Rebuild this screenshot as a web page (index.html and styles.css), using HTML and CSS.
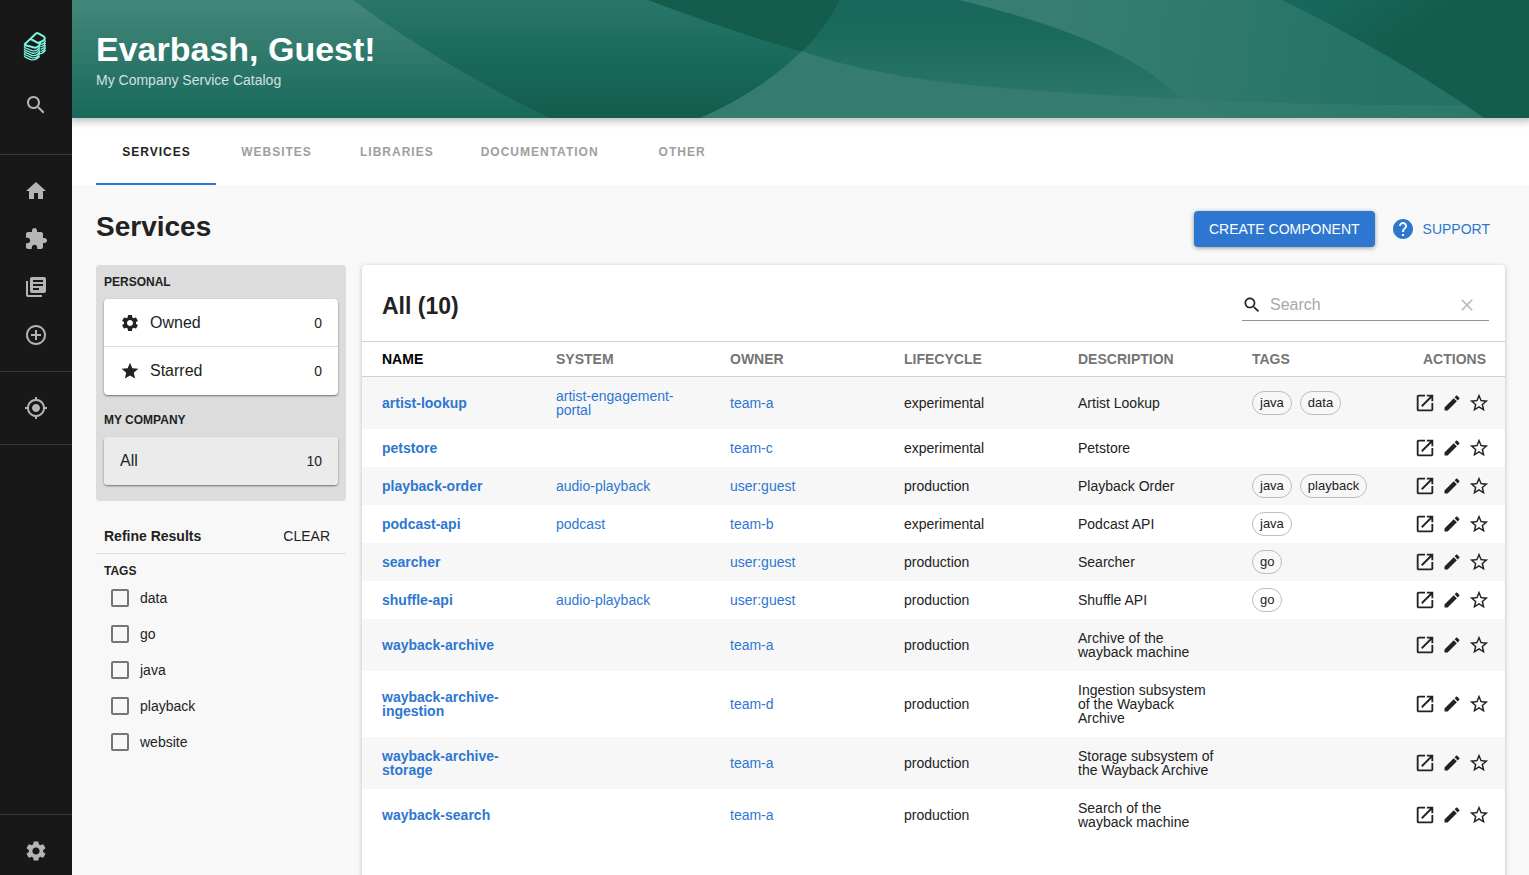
FILE: index.html
```html
<!DOCTYPE html>
<html lang="en">
<head>
<meta charset="utf-8">
<title>Service Catalog</title>
<link rel="stylesheet" href="styles.css">
</head>
<body>
<svg class="sprite" aria-hidden="true">
  <symbol id="i-search" viewBox="0 0 24 24"><path d="M15.5 14h-.79l-.28-.27C15.41 12.59 16 11.11 16 9.5 16 5.91 13.09 3 9.5 3S3 5.91 3 9.5 5.91 16 9.5 16c1.61 0 3.09-.59 4.23-1.57l.27.28v.79l5 4.99L20.49 19l-4.99-5zm-6 0C7.01 14 5 11.99 5 9.5S7.01 5 9.5 5 14 7.01 14 9.5 11.99 14 9.5 14z"/></symbol>
  <symbol id="i-home" viewBox="0 0 24 24"><path d="M10 20v-6h4v6h5v-8h3L12 3 2 12h3v8z"/></symbol>
  <symbol id="i-ext" viewBox="0 0 24 24"><path d="M20.5 11H19V7c0-1.1-.9-2-2-2h-4V3.5C13 2.12 11.88 1 10.5 1S8 2.12 8 3.5V5H4c-1.1 0-1.99.9-1.99 2v3.8H3.5c1.49 0 2.7 1.21 2.7 2.7s-1.21 2.7-2.7 2.7H2V20c0 1.1.9 2 2 2h3.8v-1.5c0-1.49 1.21-2.7 2.7-2.7 1.49 0 2.7 1.21 2.7 2.7V22H17c1.1 0 2-.9 2-2v-4h1.5c1.38 0 2.5-1.12 2.5-2.5S21.88 11 20.5 11z"/></symbol>
  <symbol id="i-docs" viewBox="0 0 24 24"><path d="M4 6H2v14c0 1.1.9 2 2 2h14v-2H4V6zm16-4H8c-1.1 0-2 .9-2 2v12c0 1.1.9 2 2 2h12c1.1 0 2-.9 2-2V4c0-1.1-.9-2-2-2zm-1 9H9V9h10v2zm-4 4H9v-2h6v2zm4-8H9V5h10v2z"/></symbol>
  <symbol id="i-add" viewBox="0 0 24 24"><path d="M13 7h-2v4H7v2h4v4h2v-4h4v-2h-4V7zm-1-5C6.48 2 2 6.48 2 12s4.48 10 10 10 10-4.48 10-10S17.52 2 12 2zm0 18c-4.41 0-8-3.59-8-8s3.59-8 8-8 8 3.59 8 8-3.59 8-8 8z"/></symbol>
  <symbol id="i-loc" viewBox="0 0 24 24"><path d="M12 8c-2.21 0-4 1.79-4 4s1.79 4 4 4 4-1.79 4-4-1.79-4-4-4zm8.94 3c-.46-4.17-3.77-7.48-7.94-7.94V1h-2v2.06C6.83 3.52 3.52 6.83 3.06 11H1v2h2.06c.46 4.17 3.77 7.48 7.94 7.94V23h2v-2.06c4.17-.46 7.48-3.77 7.94-7.94H23v-2h-2.06zM12 19c-3.87 0-7-3.13-7-7s3.13-7 7-7 7 3.13 7 7-3.13 7-7 7z"/></symbol>
  <symbol id="i-gear" viewBox="0 0 24 24"><path d="M19.14 12.94c.04-.3.06-.61.06-.94 0-.32-.02-.64-.07-.94l2.03-1.58c.18-.14.23-.41.12-.61l-1.92-3.32c-.12-.22-.37-.29-.59-.22l-2.39.96c-.5-.38-1.03-.7-1.62-.94l-.36-2.54c-.04-.24-.24-.41-.48-.41h-3.84c-.24 0-.43.17-.47.41l-.36 2.54c-.59.24-1.13.57-1.62.94l-2.39-.96c-.22-.08-.47 0-.59.22L2.74 8.87c-.12.21-.08.47.12.61l2.03 1.58c-.05.3-.09.63-.09.94s.02.64.07.94l-2.03 1.58c-.18.14-.23.41-.12.61l1.92 3.32c.12.22.37.29.59.22l2.39-.96c.5.38 1.03.7 1.62.94l.36 2.54c.05.24.24.41.48.41h3.84c.24 0 .44-.17.47-.41l.36-2.54c.59-.24 1.13-.56 1.62-.94l2.39.96c.22.08.47 0 .59-.22l1.92-3.32c.12-.22.07-.47-.12-.61l-2.01-1.58zM12 15.6c-1.98 0-3.6-1.62-3.6-3.6s1.62-3.6 3.6-3.6 3.6 1.62 3.6 3.6-1.62 3.6-3.6 3.6z"/></symbol>
  <symbol id="i-star" viewBox="0 0 24 24"><path d="M12 17.27L18.18 21l-1.64-7.03L22 9.24l-7.19-.61L12 2 9.19 8.63 2 9.24l5.46 4.73L5.82 21z"/></symbol>
  <symbol id="i-star-o" viewBox="0 0 24 24"><path d="M22 9.24l-7.19-.62L12 2 9.19 8.63 2 9.24l5.46 4.73L5.82 21 12 17.27 18.18 21l-1.63-7.03L22 9.24zM12 15.4l-3.76 2.27 1-4.28-3.32-2.88 4.38-.38L12 6.1l1.71 4.04 4.38.38-3.32 2.88 1 4.28L12 15.4z"/></symbol>
  <symbol id="i-open" viewBox="0 0 24 24"><path d="M19 19H5V5h7V3H5c-1.11 0-2 .9-2 2v14c0 1.1.89 2 2 2h14c1.1 0 2-.9 2-2v-7h-2v7zM14 3v2h3.59l-9.83 9.83 1.41 1.41L19 6.41V10h2V3h-7z"/></symbol>
  <symbol id="i-edit" viewBox="0 0 24 24"><path d="M3 17.25V21h3.75L17.81 9.94l-3.75-3.75L3 17.25zM20.71 7.04c.39-.39.39-1.02 0-1.41l-2.34-2.34c-.39-.39-1.02-.39-1.41 0l-1.83 1.83 3.75 3.75 1.83-1.83z"/></symbol>
  <symbol id="i-help" viewBox="0 0 24 24"><path d="M12 2C6.48 2 2 6.48 2 12s4.48 10 10 10 10-4.48 10-10S17.52 2 12 2zm1 17h-2v-2h2v2zm2.07-7.75l-.9.92C13.45 12.9 13 13.5 13 15h-2v-.5c0-1.1.45-2.1 1.17-2.83l1.24-1.26c.37-.36.59-.86.59-1.41 0-1.1-.9-2-2-2s-2 .9-2 2H8c0-2.21 1.79-4 4-4s4 1.79 4 4c0 .88-.36 1.68-.93 2.25z"/></symbol>
  <symbol id="i-clear" viewBox="0 0 24 24"><path d="M19 6.41L17.59 5 12 10.59 6.41 5 5 6.41 10.59 12 5 17.59 6.41 19 12 13.41 17.59 19 19 17.59 13.41 12z"/></symbol>
</svg>
<div class="app">
  <nav class="rail" aria-label="Main">
    <a class="logo" href="#" aria-label="Home page">
      <svg viewBox="24 18 72 90" width="24" height="30">
        <g fill="none" stroke="#7df3e1" stroke-linejoin="round" stroke-linecap="round">
          <path stroke-width="6" d="M30 57 64 25q3-2 6 0l17 10q5 5 0 10-5 5-12 6 2 7-4 12-9 8-19 3L31 61q-3-2-1-4zM47 42l20 11q4 2 8-2"/>
          <path stroke-width="4" d="M28 65q1 2 4 4l19 8q14 4 24-12M28 72q1 2 4 4l19 8q14 4 24-12M28 79q1 2 4 4l19 8q14 4 24-12M28 86q1 2 4 4l19 8q14 4 24-12M28 93q1 2 4 4l15 7q14 3 26-9M80 58q9-3 11-10M80 65q9-3 11-10M80 72q9-3 11-10M80 79q9-3 11-10M78 86q10-3 13-10"/>
        </g>
      </svg>
    </a>
    <button class="rail-item" aria-label="Search"><svg class="ic24"><use href="#i-search"/></svg></button>
    <hr class="rail-line rail-line-first">
    <a class="rail-item" href="#" aria-label="Home"><svg class="ic24"><use href="#i-home"/></svg></a>
    <a class="rail-item" href="#" aria-label="Plugins"><svg class="ic24"><use href="#i-ext"/></svg></a>
    <a class="rail-item" href="#" aria-label="Docs"><svg class="ic24"><use href="#i-docs"/></svg></a>
    <a class="rail-item" href="#" aria-label="Create"><svg class="ic24"><use href="#i-add"/></svg></a>
    <hr class="rail-line">
    <a class="rail-item" href="#" aria-label="Tech Radar"><svg class="ic24"><use href="#i-loc"/></svg></a>
    <hr class="rail-line">
    <div class="rail-space"></div>
    <hr class="rail-line">
    <a class="rail-item" href="#" aria-label="Settings"><svg class="ic24"><use href="#i-gear"/></svg></a>
  </nav>
  <main class="page">
    <header class="hero">
      <svg class="hero-art" viewBox="72 0 1457 118" preserveAspectRatio="none" aria-hidden="true">
        <defs>
          <linearGradient id="ga" x1="0" y1="0" x2="0" y2="1"><stop offset="0" stop-color="#43877a"/><stop offset="1" stop-color="#18695a"/></linearGradient>
          <linearGradient id="gb" x1="0" y1="0" x2="0" y2="1"><stop offset="0" stop-color="#2a776a"/><stop offset=".5" stop-color="#186a5b"/><stop offset="1" stop-color="#145c4c"/></linearGradient>
          <linearGradient id="gc" x1="0" y1="0" x2="0" y2="1"><stop offset="0" stop-color="#17685a"/><stop offset=".3" stop-color="#1b6b5d"/><stop offset="1" stop-color="#2f7a6c"/></linearGradient>
          <linearGradient id="gd" gradientUnits="userSpaceOnUse" x1="1060" y1="20" x2="1390" y2="70"><stop offset="0" stop-color="#377e70"/><stop offset="1" stop-color="#247365"/></linearGradient>
          <linearGradient id="ge" gradientUnits="userSpaceOnUse" x1="1330" y1="0" x2="1375" y2="65"><stop offset="0" stop-color="#17685a"/><stop offset="1" stop-color="#145c4b"/></linearGradient>
          <linearGradient id="gf" gradientUnits="userSpaceOnUse" x1="1200" y1="0" x2="1484" y2="0"><stop offset="0" stop-color="#357c6f"/><stop offset="1" stop-color="#2b786a"/></linearGradient>
        </defs>
        <rect x="72" y="0" width="1457" height="118" fill="url(#gb)"/>
        <path fill="url(#ga)" d="M72 0H353Q440 65 550 118H72z"/>
        <path fill="#145c4b" d="M648 0Q727 30 802 52 827 27 840 0z"/>
        <path fill="url(#gc)" d="M840 0H1210V118H1000L802 52Q827 27 840 0z"/>
        <path fill="url(#gd)" d="M959 0H1282Q1400 58 1484 118H1198C1155 60 1070 27 959 0z"/>
        <path fill="url(#gf)" d="M700 118Q760 92 802 51C900 88 1060 92 1181 99Q1320 106 1468 105L1484 118z"/>
        <path fill="url(#ge)" d="M1282 0H1529V118H1484Q1400 58 1282 0z"/>
      </svg>
      <div class="hero-text">
        <h1 class="hero-title">Evarbash, Guest!</h1>
        <p class="hero-sub">My Company Service Catalog</p>
      </div>
    </header>
    <div class="tabs" role="tablist">
      <button class="tab tab-on" role="tab" aria-selected="true">SERVICES</button>
      <button class="tab" role="tab">WEBSITES</button>
      <button class="tab" role="tab">LIBRARIES</button>
      <button class="tab" role="tab">DOCUMENTATION</button>
      <button class="tab" role="tab">OTHER</button>
    </div>
    <div class="content">
      <div class="title-row">
        <h2 class="title">Services</h2>
        <button class="create">CREATE COMPONENT</button>
        <button class="support"><svg class="ic24"><use href="#i-help"/></svg>SUPPORT</button>
      </div>
      <div class="columns">
        <aside>
          <div class="groups">
            <h3 class="label">PERSONAL</h3>
            <div class="menu">
              <button class="menu-item menu-line"><svg class="ic20"><use href="#i-gear"/></svg><span class="menu-name">Owned</span><span class="menu-count">0</span></button>
              <button class="menu-item"><svg class="ic20"><use href="#i-star"/></svg><span class="menu-name">Starred</span><span class="menu-count">0</span></button>
            </div>
            <h3 class="label">MY COMPANY</h3>
            <div class="menu">
              <button class="menu-item menu-on"><span class="menu-name">All</span><span class="menu-count">10</span></button>
            </div>
          </div>
          <div class="refine">
            <h3 class="refine-title">Refine Results</h3>
            <button class="clear">CLEAR</button>
          </div>
          <h3 class="label label-tags">TAGS</h3>
          <div class="checks">
            <label class="check"><input class="box" type="checkbox">data</label>
            <label class="check"><input class="box" type="checkbox">go</label>
            <label class="check"><input class="box" type="checkbox">java</label>
            <label class="check"><input class="box" type="checkbox">playback</label>
            <label class="check"><input class="box" type="checkbox">website</label>
          </div>
        </aside>
        <section class="card">
          <div class="card-head">
            <h2 class="card-title">All (10)</h2>
            <div class="search">
              <svg class="ic20"><use href="#i-search"/></svg>
              <input class="search-input" type="text" placeholder="Search" aria-label="Search">
              <button class="search-clear" aria-label="Clear search"><svg class="ic20"><use href="#i-clear"/></svg></button>
            </div>
          </div>
          <table class="table">
            <thead>
              <tr><th class="sorted">NAME</th><th>SYSTEM</th><th>OWNER</th><th>LIFECYCLE</th><th>DESCRIPTION</th><th>TAGS</th><th class="col-actions">ACTIONS</th></tr>
            </thead>
            <tbody>
              <tr><td><a class="name" href="#">artist-lookup</a></td><td><a href="#">artist-engagement-portal</a></td><td><a href="#">team-a</a></td><td>experimental</td><td>Artist Lookup</td><td class="tags"><div class="chips"><span class="chip">java</span><span class="chip">data</span></div></td><td class="acts"><div class="act-row"><button class="act" aria-label="View"><svg class="ic22"><use href="#i-open"/></svg></button><button class="act" aria-label="Edit"><svg class="ic20"><use href="#i-edit"/></svg></button><button class="act" aria-label="Star"><svg class="ic22"><use href="#i-star-o"/></svg></button></div></td></tr>
              <tr><td><a class="name" href="#">petstore</a></td><td></td><td><a href="#">team-c</a></td><td>experimental</td><td>Petstore</td><td></td><td class="acts"><div class="act-row"><button class="act" aria-label="View"><svg class="ic22"><use href="#i-open"/></svg></button><button class="act" aria-label="Edit"><svg class="ic20"><use href="#i-edit"/></svg></button><button class="act" aria-label="Star"><svg class="ic22"><use href="#i-star-o"/></svg></button></div></td></tr>
              <tr><td><a class="name" href="#">playback-order</a></td><td><a href="#">audio-playback</a></td><td><a href="#">user:guest</a></td><td>production</td><td>Playback Order</td><td class="tags"><div class="chips"><span class="chip">java</span><span class="chip">playback</span></div></td><td class="acts"><div class="act-row"><button class="act" aria-label="View"><svg class="ic22"><use href="#i-open"/></svg></button><button class="act" aria-label="Edit"><svg class="ic20"><use href="#i-edit"/></svg></button><button class="act" aria-label="Star"><svg class="ic22"><use href="#i-star-o"/></svg></button></div></td></tr>
              <tr><td><a class="name" href="#">podcast-api</a></td><td><a href="#">podcast</a></td><td><a href="#">team-b</a></td><td>experimental</td><td>Podcast API</td><td class="tags"><div class="chips"><span class="chip">java</span></div></td><td class="acts"><div class="act-row"><button class="act" aria-label="View"><svg class="ic22"><use href="#i-open"/></svg></button><button class="act" aria-label="Edit"><svg class="ic20"><use href="#i-edit"/></svg></button><button class="act" aria-label="Star"><svg class="ic22"><use href="#i-star-o"/></svg></button></div></td></tr>
              <tr><td><a class="name" href="#">searcher</a></td><td></td><td><a href="#">user:guest</a></td><td>production</td><td>Searcher</td><td class="tags"><div class="chips"><span class="chip">go</span></div></td><td class="acts"><div class="act-row"><button class="act" aria-label="View"><svg class="ic22"><use href="#i-open"/></svg></button><button class="act" aria-label="Edit"><svg class="ic20"><use href="#i-edit"/></svg></button><button class="act" aria-label="Star"><svg class="ic22"><use href="#i-star-o"/></svg></button></div></td></tr>
              <tr><td><a class="name" href="#">shuffle-api</a></td><td><a href="#">audio-playback</a></td><td><a href="#">user:guest</a></td><td>production</td><td>Shuffle API</td><td class="tags"><div class="chips"><span class="chip">go</span></div></td><td class="acts"><div class="act-row"><button class="act" aria-label="View"><svg class="ic22"><use href="#i-open"/></svg></button><button class="act" aria-label="Edit"><svg class="ic20"><use href="#i-edit"/></svg></button><button class="act" aria-label="Star"><svg class="ic22"><use href="#i-star-o"/></svg></button></div></td></tr>
              <tr><td><a class="name" href="#">wayback-archive</a></td><td></td><td><a href="#">team-a</a></td><td>production</td><td>Archive of the wayback machine</td><td></td><td class="acts"><div class="act-row"><button class="act" aria-label="View"><svg class="ic22"><use href="#i-open"/></svg></button><button class="act" aria-label="Edit"><svg class="ic20"><use href="#i-edit"/></svg></button><button class="act" aria-label="Star"><svg class="ic22"><use href="#i-star-o"/></svg></button></div></td></tr>
              <tr><td><a class="name" href="#">wayback-archive-ingestion</a></td><td></td><td><a href="#">team-d</a></td><td>production</td><td>Ingestion subsystem of the Wayback Archive</td><td></td><td class="acts"><div class="act-row"><button class="act" aria-label="View"><svg class="ic22"><use href="#i-open"/></svg></button><button class="act" aria-label="Edit"><svg class="ic20"><use href="#i-edit"/></svg></button><button class="act" aria-label="Star"><svg class="ic22"><use href="#i-star-o"/></svg></button></div></td></tr>
              <tr><td><a class="name" href="#">wayback-archive-storage</a></td><td></td><td><a href="#">team-a</a></td><td>production</td><td>Storage subsystem of the Wayback Archive</td><td></td><td class="acts"><div class="act-row"><button class="act" aria-label="View"><svg class="ic22"><use href="#i-open"/></svg></button><button class="act" aria-label="Edit"><svg class="ic20"><use href="#i-edit"/></svg></button><button class="act" aria-label="Star"><svg class="ic22"><use href="#i-star-o"/></svg></button></div></td></tr>
              <tr><td><a class="name" href="#">wayback-search</a></td><td></td><td><a href="#">team-a</a></td><td>production</td><td>Search of the wayback machine</td><td></td><td class="acts"><div class="act-row"><button class="act" aria-label="View"><svg class="ic22"><use href="#i-open"/></svg></button><button class="act" aria-label="Edit"><svg class="ic20"><use href="#i-edit"/></svg></button><button class="act" aria-label="Star"><svg class="ic22"><use href="#i-star-o"/></svg></button></div></td></tr>
            </tbody>
          </table>
        </section>
      </div>
    </div>
  </main>
</div>
</body>
</html>
```
FILE: styles.css
```css
* { box-sizing: border-box; }

body {
  margin: 0;
  background: #f8f8f8;
  color: #222;
  font-family: "Liberation Sans", Helvetica, Arial, sans-serif;
  font-size: 14px;
}

h1, h2, h3, p { margin: 0; }

button {
  margin: 0;
  padding: 0;
  border: 0;
  background: none;
  color: inherit;
  font: inherit;
  cursor: pointer;
}

a { color: #2e77d0; text-decoration: none; }

svg { display: block; flex: none; fill: currentColor; }

.sprite { position: absolute; width: 0; height: 0; }
.ic20 { width: 20px; height: 20px; }
.ic22 { width: 22px; height: 22px; }
.ic24 { width: 24px; height: 24px; }

.app { display: flex; height: 100vh; }

/* Navigation rail */
.rail {
  display: flex;
  flex: none;
  flex-direction: column;
  width: 72px;
  background: #181818;
  color: #b5b5b5;
}

.logo { display: flex; justify-content: center; padding: 31px 2px 20px 0; }

.rail-item {
  display: flex;
  align-items: center;
  justify-content: center;
  height: 48px;
  color: #b5b5b5;
}

.rail-line {
  width: 100%;
  height: 1px;
  margin: 12px 0;
  border: 0;
  background: #383838;
}
.rail-line-first { margin-top: 25px; margin-bottom: 12px; }
.rail-space { flex: 1; }

.page { flex: 1; min-width: 0; overflow-y: auto; scrollbar-width: none; }

/* Banner */
.hero {
  position: relative;
  display: flex;
  align-items: center;
  height: 118px;
  padding: 2px 24px 0;
  box-shadow: 0 0 8px 3px rgba(20, 20, 20, 0.3);
  color: #fff;
}
.hero-art { position: absolute; inset: 0; width: 100%; height: 100%; }
.hero-text { position: relative; }
.hero-title { font-size: 34px; line-height: 40px; }
.hero-sub { color: rgba(255, 255, 255, 0.8); line-height: 22px; }

/* Tabs */
.tabs {
  display: flex;
  height: 67px;
  padding: 0 24px;
  background: #fff;
}
.tab {
  min-width: 120px;
  padding: 2px 23px 0 24px;
  border-bottom: 2px solid transparent;
  color: #9e9e9e;
  font-size: 12px;
  font-weight: bold;
  letter-spacing: 1px;
}
.tab-on { border-bottom-color: #2e77d0; color: #222; }

.content { padding: 24px; }

.title-row { display: flex; align-items: center; height: 36px; margin: 2px 0 18px; }
.title { flex: 1; font-size: 28px; line-height: 32px; padding-bottom: 4px; }
.create {
  height: 36px;
  padding: 0 15px;
  border-radius: 4px;
  background: #2e77d0;
  box-shadow: 0 1px 4px rgba(0, 0, 0, 0.4);
  color: #fff;
}
.support {
  display: flex;
  align-items: center;
  gap: 8px;
  padding: 0 15px 0 16px;
  color: #2e77d0;
}

.columns { display: grid; grid-template-columns: 250px minmax(0, 1fr); gap: 16px; }

/* Filters */
.groups { padding: 0 8px 16px; border-radius: 4px; background: #dcdcdc; }
.label { padding: 10px 0; font-size: 12px; line-height: 14px; }
.menu {
  overflow: hidden;
  border-radius: 4px;
  background: #fff;
  box-shadow: 0 1px 2px rgba(0, 0, 0, 0.5);
}
.menu + .label { padding-top: 18px; }
.menu-item {
  display: flex;
  align-items: center;
  gap: 10px;
  width: 100%;
  height: 48px;
  padding: 0 16px;
  text-align: left;
}
.menu-line { border-bottom: 1px solid #dcdcdc; }
.menu-on { background: #ebebeb; }
.menu-name { flex: 1; font-size: 16px; }

.refine {
  display: flex;
  align-items: center;
  justify-content: space-between;
  height: 36px;
  margin-top: 17px;
  padding: 0 16px 0 8px;
  border-bottom: 1px solid #dcdcdc;
}
.refine-title { font-size: 14px; }
.label-tags { padding: 10px 8px 2px; }
.checks { display: flex; flex-direction: column; }
.check { display: flex; align-items: center; gap: 11px; height: 36px; padding-left: 15px; }
.box {
  appearance: none;
  width: 18px;
  height: 18px;
  margin: 0;
  border: 2px solid #757575;
  border-radius: 2px;
}

/* Entity table */
.card {
  min-height: 100vh;
  border-radius: 4px;
  background: #fff;
  box-shadow: 0 1px 4px rgba(0, 0, 0, 0.25);
}
.card-head {
  display: flex;
  align-items: center;
  justify-content: space-between;
  height: 76px;
  padding: 4px 16px 0 20px;
}
.card-title { font-size: 23px; line-height: 28px; padding-top: 2px; }
.search {
  display: flex;
  align-items: center;
  width: 247px;
  height: 32px;
  border-bottom: 1px solid #949494;
}
.search-input {
  flex: 1;
  min-width: 0;
  padding: 0 8px;
  border: 0;
  outline: 0;
  background: none;
  color: #222;
  font: inherit;
  font-size: 16px;
}
.search-input::placeholder { color: #a8a8a8; }
.search-clear { margin-right: 12px; color: #bdbdbd; }

.table { width: 100%; border-collapse: separate; border-spacing: 0; table-layout: fixed; }
th {
  height: 36px;
  padding: 0 15px 0 20px;
  border-top: 1px solid #d0d0d0;
  border-bottom: 1px solid #d0d0d0;
  color: #757575;
  font-size: 14px;
  text-align: left;
}
th.sorted { color: #000; }
th.col-actions { width: 99px; padding: 0 19px 0 0; text-align: right; }
td { padding: 12px 15px 12px 20px; line-height: 14px; vertical-align: middle; }
tbody tr:nth-child(odd) { background: #f7f7f7; }
.name { font-weight: bold; }
td.tags { padding-top: 0; padding-bottom: 0; }
td.acts { padding: 0 0 0 8px; }
.act-row { display: flex; align-items: center; gap: 6px; }
.chips { display: flex; gap: 8px; }
.chip {
  height: 24px;
  padding: 0 7px;
  border: 1px solid #bdbdbd;
  border-radius: 12px;
  font-size: 13px;
  line-height: 22px;
}
```
